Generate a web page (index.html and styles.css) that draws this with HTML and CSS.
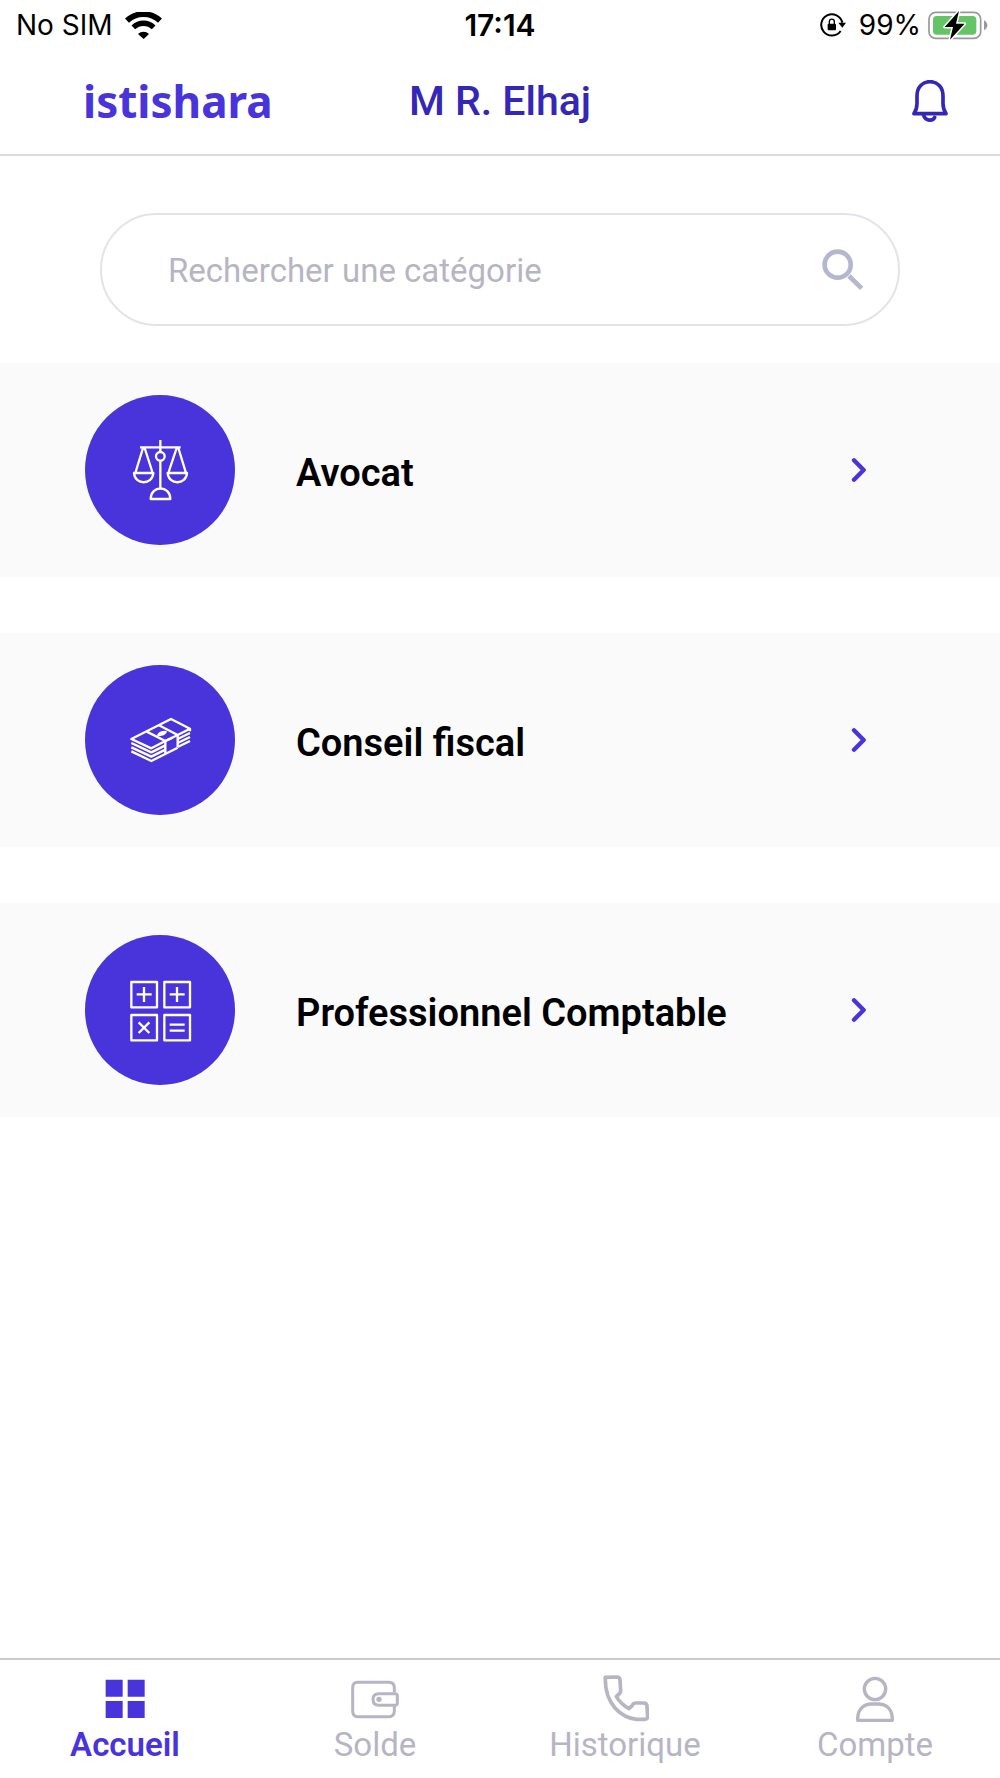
FILE: index.html
```html
<!DOCTYPE html>
<html lang="fr">
<head>
  <meta charset="UTF-8">
  <meta name="viewport" content="width=device-width, initial-scale=1">
  <title>istishara</title>
  <link rel="stylesheet" href="styles.css">
</head>
<body>
  <div class="status-bar">
    <div class="status-left">
      <span>No SIM</span>
      <svg class="wifi" width="37" height="27" viewBox="0 0 111 81">
        <path d="M6 26 A72 72 0 0 1 105 26" fill="none" stroke="#000" stroke-width="17"/>
        <path d="M25 46 A44 44 0 0 1 86 46" fill="none" stroke="#000" stroke-width="16"/>
        <path d="M39 66 A24 24 0 0 1 72 66 L56 81 Z"/>
      </svg>
    </div>
    <span class="time">17:14</span>
    <div class="status-right">
      <svg class="lock" width="26" height="24" viewBox="0 0 78 72">
        <path d="M67 29 A32 32 0 1 0 62 54" fill="none" stroke="#000" stroke-width="6"/>
        <path d="M55 29 H78 L67 44 Z"/>
        <rect x="23" y="32" width="25" height="20" rx="3"/>
        <path d="M28 33 V26 A7 7 0 0 1 43 26 V33" fill="none" stroke="#000" stroke-width="4"/>
      </svg>
      <span>99%</span>
      <svg class="battery" width="60" height="29" viewBox="0 0 180 87">
        <rect x="3" y="4" width="155" height="78" rx="20" fill="none" stroke="#999" stroke-width="5"/>
        <path d="M168 28 Q178 34 178 43 Q178 52 168 58 Z" fill="#999"/>
        <rect x="15" y="15" width="130" height="56" rx="11" fill="#65c466"/>
        <path d="M93 0 L50 48 H75 L66 86 L110 38 H84 Z" stroke="#fff" stroke-width="9" stroke-linejoin="round" paint-order="stroke"/>
      </svg>
    </div>
  </div>

  <header class="header">
    <span class="logo">istishara</span>
    <h1>M R. Elhaj</h1>
    <button class="btn-bell" type="button" aria-label="Notifications">
      <svg width="36" height="42" viewBox="0 0 108 126" fill="none" stroke="currentColor" stroke-width="11" stroke-linecap="round" stroke-linejoin="round">
        <path d="M6 101 H102 C97 94 93 84 93 70 V47 C93 22 76 5 54 5 C32 5 15 22 15 47 V70 C15 84 11 94 6 101 Z"/>
        <path d="M35 106 C40 124 63 124 68 112"/>
      </svg>
    </button>
  </header>

  <main>
    <form class="search">
      <input type="search" placeholder="Rechercher une catégorie" aria-label="Rechercher une catégorie">
      <button type="submit" aria-label="Rechercher">
        <svg width="42" height="42" viewBox="0 0 126 126" fill="none" stroke="currentColor" stroke-width="14">
          <circle cx="47" cy="47" r="39"/>
          <path d="M81 81 L119 118"/>
        </svg>
      </button>
    </form>

    <div class="categories">
      <a class="category" href="#avocat">
        <span class="category-icon">
          <svg width="60" height="60" viewBox="60 60 180 180">
            <path d="M151 60 V96 M90 82 H212 M151 122 V206"/>
            <circle cx="151" cy="109" r="13"/>
            <path d="M99 84 L76 159 M104 84 L128 159 M72 159 H130 C128 196 74 196 72 159 Z"/>
            <path d="M200 84 L175 159 M205 84 L228 159 M173 159 H231 C229 196 175 196 173 159 Z"/>
            <path d="M122 237 H181 C181 195 122 195 122 237 Z"/>
          </svg>
        </span>
        <span class="category-name">Avocat</span>
        <svg class="chevron" width="16" height="26" viewBox="0 0 48 78"><path d="M9 10 L38 39 L9 68"/></svg>
      </a>

      <a class="category" href="#conseil-fiscal">
        <span class="category-icon">
          <svg width="60" height="60" viewBox="60 60 180 180">
            <path d="M64 147 L183 87 L240 116 L203 135 L166 153 L124 175 Z"/>
            <path d="M110 125 L166 153 V190 M147 106 L203 135 V171"/>
            <path d="M64 159 L124 187 L166 166 M64 172 L124 200 L166 179 M64 184 L124 213 L203 173 M203 147 L240 129 M203 159 L240 141 M203 171 L240 153"/>
            <path d="M240 116 V124 M166 153 L188 143"/>
            <path d="M145 135 Q151 125 167 126 Q161 136 145 135 Z" fill="#fff"/>
          </svg>
        </span>
        <span class="category-name">Conseil fiscal</span>
        <svg class="chevron" width="16" height="26" viewBox="0 0 48 78"><path d="M9 10 L38 39 L9 68"/></svg>
      </a>

      <a class="category" href="#comptable">
        <span class="category-icon">
          <svg width="60" height="60" viewBox="60 60 180 180">
            <rect x="64" y="66" width="77" height="76"/>
            <rect x="163" y="66" width="77" height="76"/>
            <rect x="64" y="165" width="77" height="76"/>
            <rect x="163" y="165" width="77" height="76"/>
            <path d="M80 103 H125 M102 81 V126 M179 103 H224 M201 81 V126"/>
            <path d="M86 187 L118 219 M118 187 L86 219 M179 194 H224 M179 212 H224"/>
          </svg>
        </span>
        <span class="category-name">Professionnel Comptable</span>
        <svg class="chevron" width="16" height="26" viewBox="0 0 48 78"><path d="M9 10 L38 39 L9 68"/></svg>
      </a>
    </div>
  </main>

  <nav class="tab-bar">
    <a class="tab active" href="#accueil">
      <svg width="48" height="48" viewBox="0 0 144 144" fill="currentColor">
        <path d="M14 17 H65 V68 H14 Z M80 17 H131 V68 H80 Z M14 81 H65 V132 H14 Z M80 81 H131 V132 H80 Z"/>
      </svg>
      <span>Accueil</span>
    </a>
    <a class="tab" href="#solde">
      <svg width="48" height="48" viewBox="0 0 144 144" fill="none" stroke="currentColor" stroke-width="9" stroke-linejoin="round">
        <path d="M130 55 V42 Q130 25 113 25 H20 Q5 25 5 42 V111 Q5 128 20 128 H113 Q130 128 130 111 V97"/>
        <path d="M84 59 H133 Q139 59 139 66 V87 Q139 94 133 94 H84 Q66 94 66 76 Q66 59 84 59 Z"/>
        <circle cx="84" cy="76" r="8" fill="currentColor" stroke="none"/>
      </svg>
      <span>Solde</span>
    </a>
    <a class="tab" href="#historique">
      <svg width="48" height="48" viewBox="0 0 144 144" fill="none" stroke="currentColor" stroke-width="11" stroke-linejoin="round">
        <path d="M13 10 L47 9 Q57 9 57 18 L59 51 Q59 55 56 58 L46 68 Q59 90 84 104 L94 94 Q97 87 104 87 L128 87 Q138 87 138 97 L140 126 Q140 136 131 136 L107 136 Q70 133 42 102 Q11 66 13 10 Z"/>
      </svg>
      <span>Historique</span>
    </a>
    <a class="tab" href="#compte">
      <svg width="48" height="48" viewBox="0 0 144 144" fill="none" stroke="currentColor" stroke-width="10" stroke-linejoin="round">
        <circle cx="72" cy="45" r="32"/>
        <path d="M20 139 H124 V133 C123 105 105 90 82 90 H62 C39 90 21 105 20 133 Z"/>
      </svg>
      <span>Compte</span>
    </a>
  </nav>
</body>
</html>
```
FILE: styles.css
```css
* {
  box-sizing: border-box;
}
body {
  margin: 0;
  min-height: 100vh;
  display: flex;
  flex-direction: column;
  font-family: Roboto, "Liberation Sans", sans-serif;
  background-color: #fff;
  color: #000;
}
a {
  color: inherit;
  text-decoration: none;
}
button {
  padding: 0;
  border: none;
  background: none;
  cursor: pointer;
}
svg {
  display: block;
  flex-shrink: 0;
}
.status-bar {
  display: grid;
  grid-template-columns: 1fr auto 1fr;
  align-items: center;
  height: 50px;
  padding: 0 12px;
  font-family: Inter, "Liberation Sans", sans-serif;
  font-size: 28px;
}
.status-left {
  display: flex;
  align-items: center;
  gap: 12px;
  padding-left: 4px;
}
.status-right {
  display: flex;
  align-items: center;
  justify-content: flex-end;
  gap: 7px;
}
.lock {
  margin-right: 6px;
}
.time {
  font-size: 30px;
  font-weight: 600;
}
.header {
  display: grid;
  grid-template-columns: 1fr auto 1fr;
  align-items: center;
  height: 106px;
  padding: 0 52px 2px;
  border-bottom: 2px solid #dcdcdc;
}
.logo {
  margin-left: 31px;
  font-family: "Noto Sans", sans-serif;
  font-size: 44px;
  font-weight: 700;
  color: #4834da;
}
.header h1 {
  margin: 0;
  font-size: 41px;
  font-weight: 500;
  color: #3427b8;
}
.btn-bell {
  justify-self: end;
  color: #3427b8;
}
.search {
  display: flex;
  align-items: center;
  height: 113px;
  margin: 57px 10% 37px;
  padding: 0 34px 0 66px;
  border: 2px solid #e4e3ea;
  border-radius: 57px;
}
.search input {
  flex: 1;
  min-width: 0;
  padding: 2px 0 0;
  border: none;
  outline: none;
  background: none;
  font-family: inherit;
  font-size: 33px;
  color: #000;
}
.search input::placeholder {
  color: #b7b5c4;
  opacity: 1;
}
.search button {
  color: #b5b7d1;
}
.categories {
  display: flex;
  flex-direction: column;
  gap: 56px;
}
.category {
  display: flex;
  align-items: center;
  gap: 61px;
  padding: 32px 133px 32px 85px;
  background-color: #fafafa;
}
.category-icon {
  display: flex;
  align-items: center;
  justify-content: center;
  flex-shrink: 0;
  width: 150px;
  height: 150px;
  border-radius: 50%;
  background-color: #4834da;
}
.category-icon svg {
  fill: none;
  stroke: #fff;
  stroke-width: 7;
  stroke-linejoin: round;
  overflow: visible;
}
.category-name {
  flex: 1;
  padding-top: 5px;
  font-size: 38px;
  font-weight: 600;
}
.chevron {
  fill: none;
  stroke: #4834da;
  stroke-width: 13;
  stroke-linecap: round;
  stroke-linejoin: round;
}
.tab-bar {
  display: grid;
  grid-template-columns: repeat(4, 1fr);
  margin-top: auto;
  border-top: 2px solid #cbcbcb;
}
.tab {
  display: flex;
  flex-direction: column;
  align-items: center;
  gap: 3px;
  padding: 14px 0 13px;
  font-size: 33px;
  line-height: 40px;
  color: #b7b5c4;
}
.tab.active {
  font-weight: 600;
  color: #4834da;
}
```
